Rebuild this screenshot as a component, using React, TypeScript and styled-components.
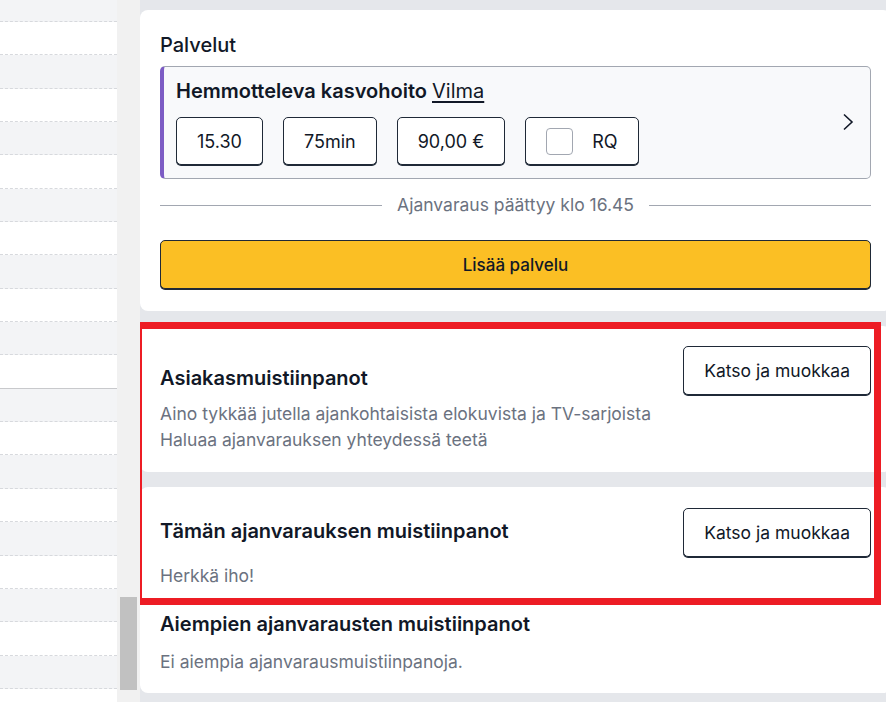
import React from 'react'
import styled, { createGlobalStyle } from 'styled-components'

const GlobalStyle = createGlobalStyle`
  html, body {
    margin: 0;
    padding: 0;
    height: 100%;
    overflow: hidden;
  }
  body {
    font-family: Inter, "Noto Sans", "Liberation Sans", sans-serif;
    color: #111827;
    background: #ffffff;
  }
`

const Layout = styled.div`
  display: flex;
  height: 702px;
  overflow: hidden;
`

const Schedule = styled.div`
  width: 117px;
  flex-shrink: 0;
  display: flex;
  flex-direction: column;
  margin-top: -11.35px;
`

const SlotRow = styled.div<{ $shaded: boolean; $hour?: boolean }>`
  height: 33.35px;
  flex-shrink: 0;
  box-sizing: border-box;
  background: ${({ $shaded }) => ($shaded ? '#f3f4f6' : '#ffffff')};
  border-bottom: 1px ${({ $hour }) => ($hour ? 'solid #c8c9cc' : 'dashed #d7d9dd')};
`

const ScrollTrack = styled.div`
  width: 23px;
  flex-shrink: 0;
  background: #f1f1f1;
  display: flex;
  flex-direction: column;
  padding: 0 3px 0 3px;
  box-sizing: border-box;
`

const ScrollThumb = styled.div<{ $top: number; $size: number }>`
  margin-top: ${({ $top }) => $top}px;
  height: ${({ $size }) => $size}px;
  width: 17px;
  background: #c1c1c1;
`

const Main = styled.div`
  flex: 1;
  background: #e5e7eb;
  padding-top: 10px;
  overflow: hidden;
  display: flex;
  flex-direction: column;
`

const Card = styled.section<{ $round?: 'all' | 'top' | 'bottom' }>`
  width: 751px;
  flex-shrink: 0;
  box-sizing: border-box;
  background: #ffffff;
  border-radius: ${({ $round = 'all' }) =>
    $round === 'top' ? '8px 8px 0 0' : $round === 'bottom' ? '0 0 8px 8px' : '8px'};
`

const ServicesCard = styled(Card)`
  padding: 21px 20px 22px 20px;
  margin-bottom: 15px;
`

const SectionTitle = styled.h2`
  margin: 0 0 7px 0;
  font-size: 20px;
  line-height: 28px;
  font-weight: 500;
  color: #111827;
`

const ServiceBox = styled.div`
  display: flex;
  align-items: center;
  border: 1px solid #a2a7b1;
  border-left: 4px solid #7c5cc4;
  border-radius: 5px;
  background: #f8f9fb;
  padding: 12px 16px 13px 12px;
`

const ServiceBody = styled.div`
  flex: 1;
  display: flex;
  flex-direction: column;
  gap: 14px;
`

const ServiceName = styled.div`
  font-size: 20px;
  line-height: 24px;
  font-weight: 600;
  color: #111827;
`

const Therapist = styled.a`
  font-weight: 400;
  color: #111827;
  text-decoration: underline;
  text-underline-offset: 3px;
`

const ChipRow = styled.div`
  display: flex;
  gap: 20px;
`

const Chip = styled.div`
  height: 48px;
  box-sizing: border-box;
  display: flex;
  align-items: center;
  gap: 19px;
  padding: 0 20px;
  border: 1px solid #1f2937;
  border-radius: 5px;
  background: #ffffff;
  font-size: 18px;
  color: #111827;
  box-shadow: 0 1px 0 #1f2937;
`

const CheckBox = styled.span`
  width: 25px;
  height: 25px;
  border: 1px solid #a2a7b1;
  border-radius: 4px;
  background: #ffffff;
`

const Chevron = styled.svg`
  width: 12px;
  height: 18px;
  flex-shrink: 0;
`

const Divider = styled.div`
  display: flex;
  align-items: center;
  gap: 15px;
  margin: 14px 0 23px 0;
  font-size: 17.5px;
  line-height: 24px;
  color: #6b7280;
  white-space: nowrap;
`

const DividerLine = styled.span`
  flex: 1;
  height: 1px;
  background: #a2a7b1;
`

const PrimaryButton = styled.button`
  width: 100%;
  height: 49px;
  border: 1px solid #1f2937;
  border-radius: 5px;
  background: #fbbf24;
  font-family: inherit;
  font-size: 17px;
  font-weight: 500;
  color: #111827;
  box-shadow: 0 1px 0 #1f2937;
`

const Highlight = styled.div`
  position: relative;
  display: flex;
  flex-direction: column;
  gap: 15px;

  &::after {
    content: '';
    position: absolute;
    top: -4px;
    bottom: -4px;
    left: -5px;
    right: 5px;
    border: 7px solid #ed1c24;
    pointer-events: none;
  }
`

const NoteCard = styled(Card)<{ $pad: string }>`
  padding: ${({ $pad }) => $pad};
`

const NoteHeader = styled.div`
  display: flex;
  justify-content: space-between;
  align-items: flex-start;
`

const NoteTitle = styled.h3<{ $offset?: number }>`
  margin: 0;
  padding-top: ${({ $offset = 0 }) => $offset}px;
  font-size: 20px;
  line-height: 28px;
  font-weight: 600;
  color: #111827;
`

const NoteText = styled.p<{ $gap: number }>`
  margin: ${({ $gap }) => $gap}px 0 0 0;
  font-size: 17.5px;
  line-height: 26px;
  color: #6b7280;
`

const OutlineButton = styled.button`
  height: 49px;
  padding: 0 20px;
  border: 1px solid #1f2937;
  border-radius: 5px;
  background: #ffffff;
  font-family: inherit;
  font-size: 17.5px;
  font-weight: 400;
  color: #111827;
  box-shadow: 0 1px 0 #1f2937;
`

const slots = Array.from({ length: 22 }, (_, i) => i)

const App = () => (
  <>
    <GlobalStyle />
    <Layout>
      <Schedule>
        {slots.map((i) => (
          <SlotRow key={i} $shaded={i % 2 === 0} $hour={i === 11} />
        ))}
      </Schedule>
      <ScrollTrack>
        <ScrollThumb $top={597} $size={93} />
      </ScrollTrack>
      <Main>
        <ServicesCard>
          <SectionTitle>Palvelut</SectionTitle>
          <ServiceBox>
            <ServiceBody>
              <ServiceName>
                Hemmotteleva kasvohoito <Therapist>Vilma</Therapist>
              </ServiceName>
              <ChipRow>
                <Chip>15.30</Chip>
                <Chip>75min</Chip>
                <Chip>90,00 €</Chip>
                <Chip>
                  <CheckBox />
                  RQ
                </Chip>
              </ChipRow>
            </ServiceBody>
            <Chevron viewBox="0 0 12 18">
              <path d="M2 1.5 L10 9 L2 16.5" fill="none" stroke="#111827" strokeWidth="1.6" />
            </Chevron>
          </ServiceBox>
          <Divider>
            <DividerLine />
            Ajanvaraus päättyy klo 16.45
            <DividerLine />
          </Divider>
          <PrimaryButton>Lisää palvelu</PrimaryButton>
        </ServicesCard>

        <Highlight>
          <NoteCard $pad="20px 20px 19px 20px">
            <NoteHeader>
              <NoteTitle $offset={18}>Asiakasmuistiinpanot</NoteTitle>
              <OutlineButton>Katso ja muokkaa</OutlineButton>
            </NoteHeader>
            <NoteText $gap={6}>
              Aino tykkää jutella ajankohtaisista elokuvista ja TV-sarjoista
              <br />
              Haluaa ajanvarauksen yhteydessä teetä
            </NoteText>
          </NoteCard>
          <NoteCard $round="top" $pad="21px 20px 12px 20px">
            <NoteHeader>
              <NoteTitle $offset={9}>Tämän ajanvarauksen muistiinpanot</NoteTitle>
              <OutlineButton>Katso ja muokkaa</OutlineButton>
            </NoteHeader>
            <NoteText $gap={6}>Herkkä iho!</NoteText>
          </NoteCard>
        </Highlight>

        <NoteCard $round="bottom" $pad="9px 20px 18px 20px">
          <NoteTitle>Aiempien ajanvarausten muistiinpanot</NoteTitle>
          <NoteText $gap={11}>Ei aiempia ajanvarausmuistiinpanoja.</NoteText>
        </NoteCard>
      </Main>
    </Layout>
  </>
)

export default App
